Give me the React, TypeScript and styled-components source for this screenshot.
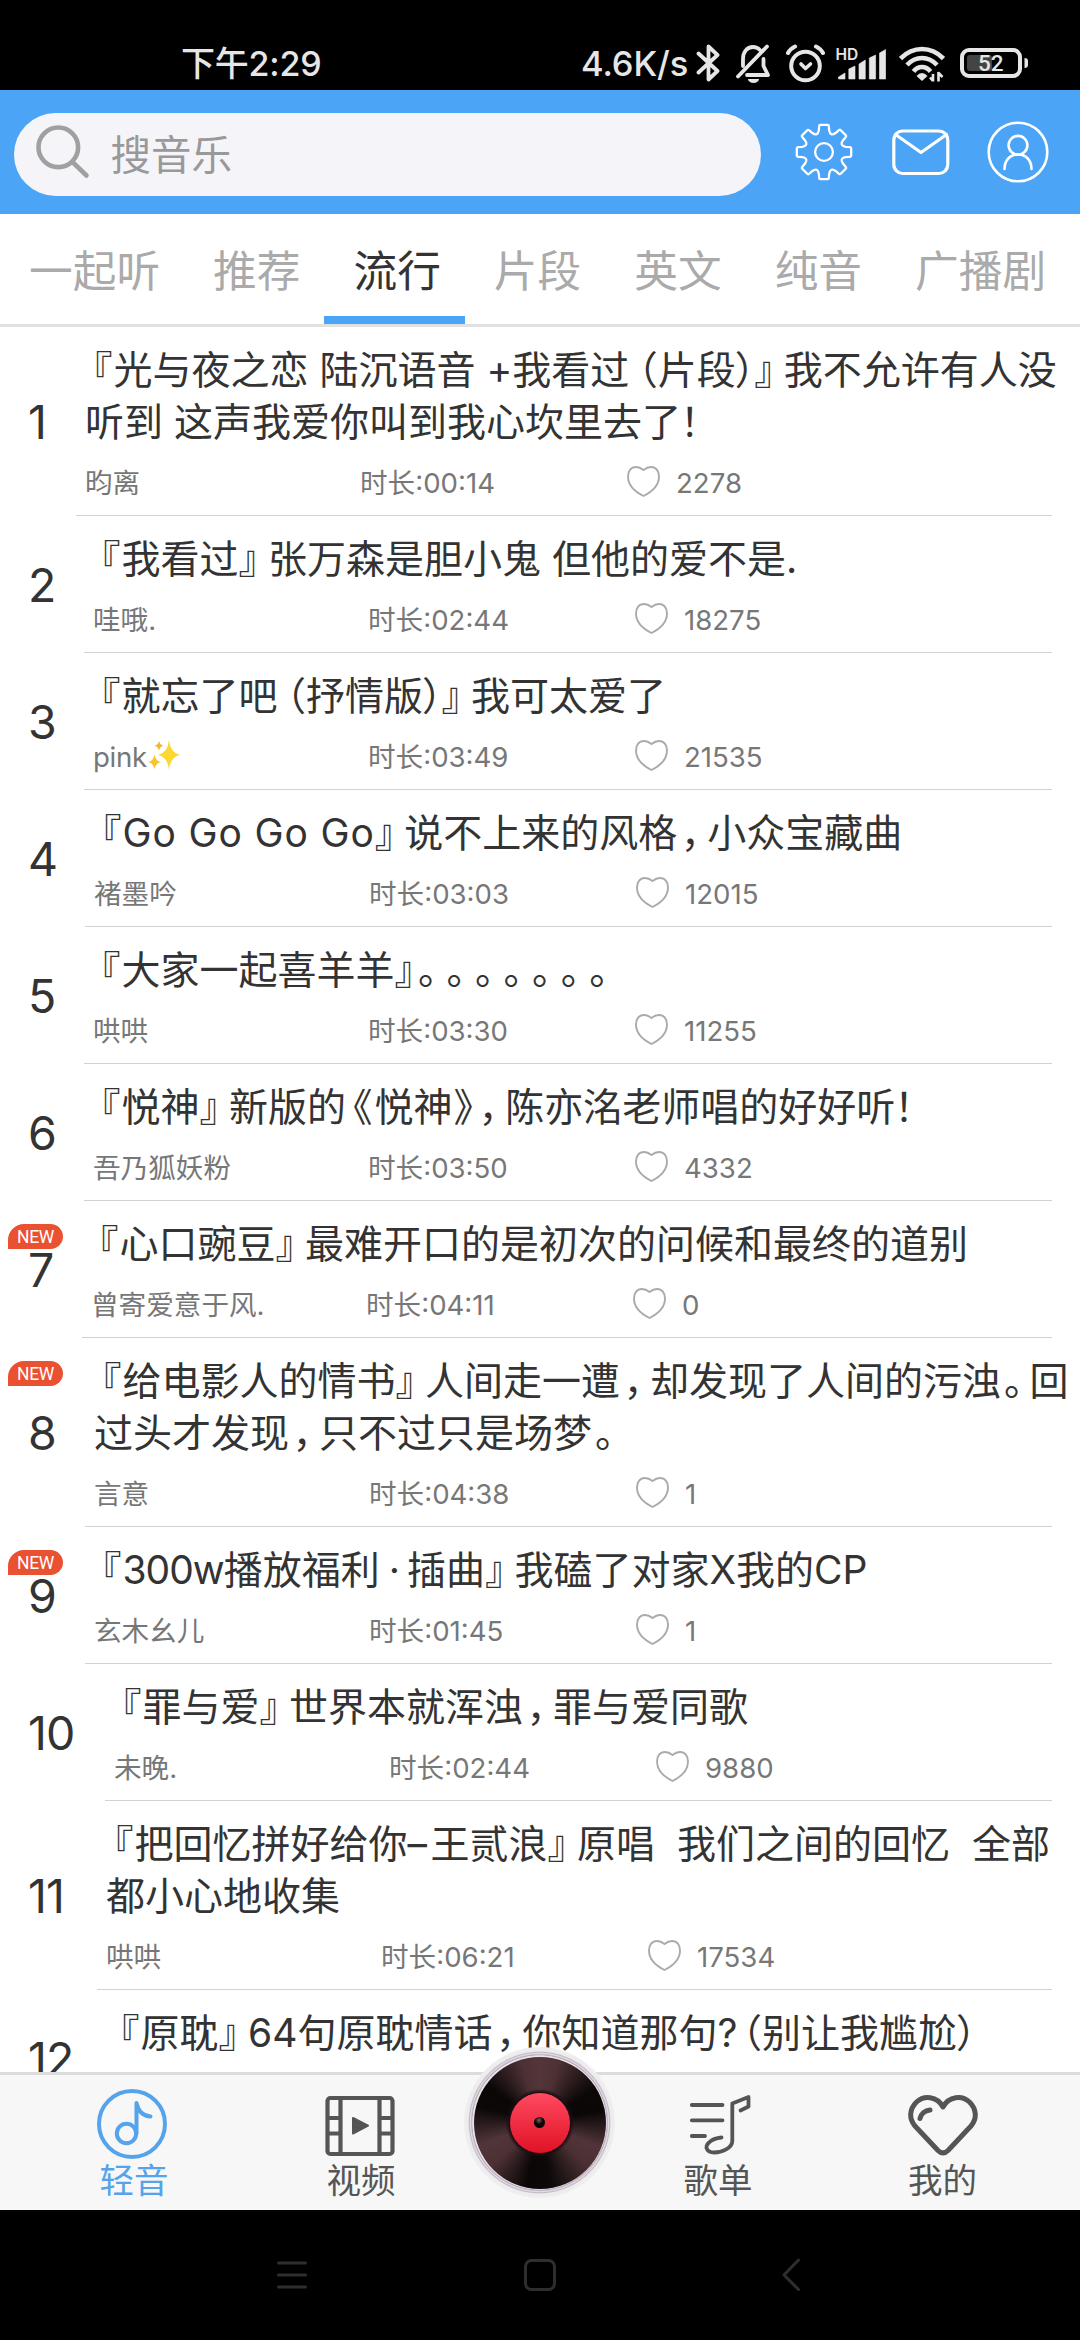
import React from "react";
import styled, { createGlobalStyle, css } from "styled-components";

const GlobalStyle = createGlobalStyle`
  * { box-sizing: border-box; }
  body {
    margin: 0;
    background: #000;
    font-family: Inter, "Noto Sans CJK SC", sans-serif;
    text-spacing-trim: space-all;
    font-kerning: normal;
  }
  svg { display: block; flex: none; }
`;

const Screen = styled.div`
  width: 1080px;
  height: 2340px;
  display: flex;
  flex-direction: column;
  overflow: hidden;
  background: #fff;
`;

/* ---------- status bar ---------- */

const StatusBar = styled.header`
  height: 90px;
  flex: none;
  display: flex;
  align-items: center;
  justify-content: space-between;
  padding: 37px 51px 0 181px;
  background: #000;
  color: #e6e6e6;
  font-weight: 500;
  white-space: nowrap;
`;

const Clock = styled.span`
  font-size: 34px;
  line-height: 40px;
  letter-spacing: -0.2px;
`;

const StatusIcons = styled.div`
  display: flex;
  align-items: center;
  height: 40px;
`;

const NetSpeed = styled.span`
  font-size: 34.5px;
  line-height: 40px;
  width: 107px;
  margin-right: 8px;
  letter-spacing: -0.1px;
`;

const StatusIcon = styled.svg<{ $after?: number }>`
  margin-right: ${(p) => p.$after ?? 0}px;
`;

/* ---------- header ---------- */

const TopBar = styled.div`
  height: 124px;
  flex: none;
  display: flex;
  align-items: center;
  padding-left: 14px;
  background: #4ba4f5;
`;

const SearchBox = styled.div`
  flex: none;
  width: 747px;
  height: 83px;
  margin: 5px 32px 0 0;
  border-radius: 42px;
  background: #f5f4f9;
  display: flex;
  align-items: center;
  padding-left: 20px;
  gap: 20.5px;
  color: #999;
  font-size: 40.5px;
  line-height: 60px;

  span { margin-top: 3px; }
`;

const HeaderIcon = styled.svg`
  margin-right: 35px;
  fill: none;
  stroke: #fff;
  stroke-linejoin: round;
  stroke-linecap: round;

  &:last-child { margin-right: 0; }
`;

const Tabs = styled.nav`
  height: 113px;
  flex: none;
  display: flex;
  border-bottom: 3px solid #e1e1e1;
`;

const Tab = styled.div<{ $active?: boolean }>`
  flex: none;
  padding: 6px 24px 0 29px;
  height: 110px;
  display: flex;
  align-items: center;
  font-size: 43.7px;
  white-space: nowrap;
  color: ${(p) => (p.$active ? "#333" : "#aaa")};
  border-bottom: 8px solid ${(p) => (p.$active ? "#4ba4f5" : "transparent")};
`;

/* ---------- list ---------- */

const List = styled.main`
  flex: 1;
  min-height: 0;
  overflow: hidden;
`;

const Row = styled.article<{ $tall: boolean }>`
  position: relative;
  height: ${(p) => (p.$tall ? 189 : 137)}px;
  display: flex;
`;

const Rank = styled.div<{ $width: number }>`
  width: ${(p) => p.$width}px;
  flex: none;
  padding-left: 28px;
  display: flex;
  align-items: center;
  font-size: 46.5px;
  line-height: 34px;
  letter-spacing: -1px;
  color: #333;
`;

const NewBadge = styled.span`
  position: absolute;
  left: 8px;
  top: 23px;
  width: 55px;
  height: 25px;
  border-radius: 16px 12.5px 12.5px 0;
  background: #ea5131;
  color: #fff;
  font: 400 17.5px/26px Roboto, sans-serif;
  letter-spacing: -0.4px;
  text-align: center;
`;

const Body = styled.div`
  flex: 1;
  min-width: 0;
  margin-right: 28px;
  padding: 17px 0 0 9px;
  border-bottom: 1px solid #d2d2d2;
  display: flex;
  flex-direction: column;
`;

const Title = styled.div`
  color: #333;
  font-size: 39px;
  line-height: 52px;
  white-space: pre;
`;

const Mark = styled.span<{ $before: number; $after: number }>`
  font-feature-settings: "halt";
  margin-left: ${(p) => p.$before}px;
  margin-right: ${(p) => p.$after}px;
`;

const Latin = styled.span<{ $spacing: number }>`
  letter-spacing: ${(p) => p.$spacing}px;
`;

const Meta = styled.div`
  display: grid;
  grid-template-columns: 275px 267px 49px 1fr;
  align-items: center;
  height: 36px;
  margin-top: 17px;
  color: #777;
  font-size: 27.6px;
  line-height: 36px;
  white-space: nowrap;

  svg { margin-top: -3px; }
`;

const Author = styled.span<{ $tight?: boolean }>`
  display: flex;
  align-items: center;
  gap: 1.5px;
  ${(p) => p.$tight && css`letter-spacing: -0.3px;`}
`;

/* ---------- bottom bar ---------- */

const BottomBar = styled.footer`
  position: relative;
  height: 138px;
  flex: none;
  border-top: 3px solid #dcdcdc;
  background: #f7f7f7;
  display: grid;
  grid-template-columns: 263px 196px 161px 196px 253px;
`;

const BottomItem = styled.div<{ $active?: boolean; $shift?: number }>`
  padding-top: 13px;
  display: flex;
  flex-direction: column;
  align-items: center;
  color: ${(p) => (p.$active ? "#55a3ea" : "#555")};
  font-size: 34.5px;
  line-height: 40px;

  svg { fill: none; stroke: currentColor; stroke-linecap: round; stroke-linejoin: round; }
  span { margin-top: -1px; margin-left: ${(p) => p.$shift ?? 0}px; }
`;

const Record = styled.div`
  position: relative;
  z-index: 1;
  justify-self: center;
  margin-top: -28px;
  width: 151px;
  height: 151px;
  border-radius: 50%;
  display: grid;
  place-items: center;
  background: radial-gradient(circle closest-side,
    #e9e4ea 0 88.5%, #b9a9b9 89.5%, #e4dde5 91.5%, #c4b9c6 93%, #ececec 94.5%, #efefef 100%);
`;

const Vinyl = styled.div`
  width: 132px;
  height: 132px;
  border-radius: 50%;
  display: grid;
  place-items: center;
  background:
    radial-gradient(circle closest-side, #1d0c12 46%, #2a0e1800 52%),
    conic-gradient(#54363a 0deg, #4b3034 18deg, #0b0807 58deg, #0a0706 78deg, #51343a 112deg, #4b3033 132deg,
      #0c0908 170deg, #0a0706 192deg, #4b3034 228deg, #51353a 250deg, #0b0807 285deg, #0a0706 305deg, #4b3034 342deg, #54363a 360deg);
`;

const Label = styled.div`
  width: 60px;
  height: 60px;
  border-radius: 50%;
  display: grid;
  place-items: center;
  background: linear-gradient(#ff4a60, #e01226);
`;

const Hole = styled.div`
  width: 11px;
  height: 11px;
  border-radius: 50%;
  background: radial-gradient(circle at 45% 30%, #8a5a5e 0, #0a0505 40%);
`;

const SystemNav = styled.div`
  height: 130px;
  flex: none;
  background: #000;
  display: flex;
  align-items: center;
  justify-content: center;
  gap: 215px;

  svg { fill: none; stroke: #2e2e2e; stroke-width: 3; stroke-linecap: round; stroke-linejoin: round; }
`;

/* ---------- data ---------- */

type Song = {
  rank: number;
  lead: number;
  lines: string[];
  author: string;
  sparkle?: boolean;
  time: string;
  likes: string;
  fresh?: boolean;
};

const songs: Song[] = [
  { rank: 1, lead: 76, lines: ["『光与夜之恋 陆沉语音 +我看过（片段）』我不允许有人没", "听到 这声我爱你叫到我心坎里去了！"], author: "昀离", time: "00:14", likes: "2278" },
  { rank: 2, lead: 84, lines: ["『我看过』张万森是胆小鬼 但他的爱不是."], author: "哇哦.", time: "02:44", likes: "18275" },
  { rank: 3, lead: 84, lines: ["『就忘了吧（抒情版）』我可太爱了"], author: "pink", sparkle: true, time: "03:49", likes: "21535" },
  { rank: 4, lead: 85, lines: ["『Go Go Go Go』说不上来的风格，小众宝藏曲"], author: "褚墨吟", time: "03:03", likes: "12015" },
  { rank: 5, lead: 84, lines: ["『大家一起喜羊羊』。。。。。。。"], author: "哄哄", time: "03:30", likes: "11255" },
  { rank: 6, lead: 84, lines: ["『悦神』新版的《悦神》，陈亦洺老师唱的好好听！"], author: "吾乃狐妖粉", time: "03:50", likes: "4332" },
  { rank: 7, lead: 82, lines: ["『心口豌豆』最难开口的是初次的问候和最终的道别"], author: "曾寄爱意于风.", time: "04:11", likes: "0", fresh: true },
  { rank: 8, lead: 85, lines: ["『给电影人的情书』人间走一遭，却发现了人间的污浊。回", "过头才发现，只不过只是场梦。"], author: "言意", time: "04:38", likes: "1", fresh: true },
  { rank: 9, lead: 85, lines: ["『300w播放福利 · 插曲』我磕了对家X我的CP"], author: "玄木幺儿", time: "01:45", likes: "1", fresh: true },
  { rank: 10, lead: 105, lines: ["『罪与爱』世界本就浑浊，罪与爱同歌"], author: "未晚.", time: "02:44", likes: "9880" },
  { rank: 11, lead: 97, lines: ["『把回忆拼好给你–王贰浪』原唱  我们之间的回忆  全部", "都小心地收集"], author: "哄哄", time: "06:21", likes: "17534" },
  { rank: 12, lead: 103, lines: ["『原耽』64句原耽情话，你知道那句?（别让我尴尬）"], author: "", time: "", likes: "" },
];

/* space before and after each half-width punctuation mark */
const spacing: Record<string, [number, number]> = {
  "『": [8, 1],
  "』": [0, 10],
  "（": [9, 0],
  "）": [-1, 0],
  "《": [7, 2],
  "》": [1, 2],
  "，": [3.5, 7],
  "。": [3, 6],
  "！": [-1, 0],
};

/* tracking of the Latin runs inside titles */
const tracking: Record<string, number> = {
  "Go Go Go Go": 0.85,
  "300w": -1,
  " · ": -2,
  "–": 3.5,
};

const tokens = /(Go Go Go Go|300w| · |–|[『』（）《》，。！])/;

function SongTitle({ text }: { text: string }) {
  const parts = text.split(tokens).filter(Boolean);
  return (
    <Title>
      {parts.map((part, i) => {
        const mark = spacing[part];
        if (mark) {
          const after = part === "』" && parts[i + 1] === "。" ? 1 : mark[1];
          const before = part === "（" && parts[i - 1]?.endsWith("?") ? 5 : mark[0];
          return <Mark key={i} $before={before} $after={after}>{part}</Mark>;
        }
        if (part in tracking) {
          return <Latin key={i} $spacing={tracking[part]}>{part}</Latin>;
        }
        return part;
      })}
    </Title>
  );
}

const LikeIcon = () => (
  <svg width="33" height="31" viewBox="0 0 33 31" fill="none" stroke="#aaa" strokeWidth="1.9" strokeLinejoin="round">
    <path d="M16.5 4C14 2 11.500 1 9 1C4 1 1 5 1 10.500C1 19 6.500 25 16.500 30C26.500 25 32 19 32 10.500C32 5 29 1 24 1C21.500 1 19 2 16.500 4Z" />
  </svg>
);

const Sparkles = () => (
  <svg width="32" height="31" viewBox="0 0 32 31" fill="#fdd835">
    <path d="M21 0Q22.500 13 32 15Q22.500 17 21 30Q19.500 17 10 15Q19.500 13 21 0Z" />
    <path d="M6.500 14.500Q7.500 21 13 22Q7.500 23 6.500 29.500Q5.500 23 0 22Q5.500 21 6.500 14.500Z" fill="#f6c52c" />
    <path d="M11 0.500Q11.700 5 15.500 5.700Q11.700 6.400 11 11Q10.300 6.400 6.500 5.700Q10.300 5 11 0.500Z" fill="#f2b632" />
  </svg>
);

function gearPath(c: number) {
  const at = (x: number, y: number, deg: number) => {
    const a = (deg * Math.PI) / 180;
    return `${(c + x * Math.cos(a) - y * Math.sin(a)).toFixed(2)} ${(c + x * Math.sin(a) + y * Math.cos(a)).toFixed(2)}`;
  };
  let d = "";
  for (let i = 0; i < 8; i++) {
    const deg = i * 45;
    d += `${i ? "L" : "M"}${at(-4.8, -26, deg)}Q${at(-4.7, -27.2, deg)} ${at(-3.6, -27.2, deg)}L${at(3.6, -27.2, deg)}Q${at(4.7, -27.2, deg)} ${at(4.8, -26, deg)}`;
    d += `L${at(5.2, -21.6, deg)}Q${at(0, -16.5, deg + 22.5)} ${at(-5.2, -21.6, deg + 45)}`;
  }
  return d + "Z";
}

const SongRow = ({ song }: { song: Song }) => (
  <Row $tall={song.lines.length > 1}>
    <Rank $width={song.lead}>{song.rank}</Rank>
    {song.fresh && <NewBadge>NEW</NewBadge>}
    <Body>
      {song.lines.map((line) => (
        <SongTitle key={line} text={line} />
      ))}
      {song.time && (
        <Meta>
          <Author $tight={song.sparkle}>
            {song.author}
            {song.sparkle && <Sparkles />}
          </Author>
          <span>时长:{song.time}</span>
          <LikeIcon />
          <span>{song.likes}</span>
        </Meta>
      )}
    </Body>
  </Row>
);

const tabs = ["一起听", "推荐", "流行", "片段", "英文", "纯音", "广播剧"];

export default function App() {
  return (
    <Screen>
      <GlobalStyle />
      <StatusBar>
        <Clock>下午2:29</Clock>
        <StatusIcons>
          <NetSpeed>4.6K/s</NetSpeed>
          <StatusIcon $after={15} width="25" height="40" fill="none" stroke="#e6e6e6" strokeWidth="3.8" strokeLinejoin="round" strokeLinecap="round">
            <path d="M2.500 9.500L21.500 27L12.500 35.500V2.500L21.500 11L2.500 28.500" />
          </StatusIcon>
          <StatusIcon $after={15} width="35" height="40" fill="none" stroke="#e6e6e6" strokeWidth="3.8" strokeLinejoin="round" strokeLinecap="round">
            <path d="M7 22V15C7 8 11 3 17 3C20 3 22 4 24 6" />
            <path d="M31 2.500L2 32.500" />
            <path d="M27.500 15V22L32 31H11" />
            <path d="M12 35H23A5.500 4 0 0 1 12 35Z" fill="#e6e6e6" stroke="none" />
          </StatusIcon>
          <StatusIcon $after={11} width="39" height="40" fill="none" stroke="#e6e6e6" strokeLinejoin="round" strokeLinecap="round">
            <circle cx="19.500" cy="22" r="14.300" strokeWidth="4" />
            <path d="M15 20L19.500 24.500L24.500 20" strokeWidth="3.600" />
            <path d="M2 9Q4 5 9 2.500M37 9Q35 5 30 2.500" strokeWidth="4" />
          </StatusIcon>
          <StatusIcon $after={13} width="50" height="40" fill="#e6e6e6">
            <text x="-0.500" y="15.500" fontFamily="Inter, sans-serif" fontWeight="600" fontSize="15.500">HD</text>
            <path d="M2.500 35V33L9 29V35ZM12.800 35V25L19 22V35ZM23 35V20L29.300 16V35ZM33.300 35V14L39.600 11V35ZM43.500 35V9L49.700 5.500V35Z" stroke="#e6e6e6" strokeWidth=".6" strokeLinejoin="round" />
          </StatusIcon>
          <StatusIcon $after={15} width="46" height="40" fill="none" stroke="#e6e6e6" strokeWidth="4.600">
            <path d="M1.500 14.500Q11 5 23 5T44.500 14.500" />
            <path d="M8 21Q14.500 14 23 14T38 21" />
            <path d="M14.500 27.500Q18 23 23 23T31.500 27.500" />
            <path d="M17.500 32Q23 26 28.500 32L23 37Z" fill="#e6e6e6" stroke="none" />
            <path d="M34 37.500V30M34 37L31 33.500M39.500 28V37.500M39 28.500L43.500 33" strokeWidth="2.600" />
          </StatusIcon>
          <StatusIcon width="69" height="40" fill="none">
            <rect x="2" y="6" width="58" height="26" rx="7" stroke="#e6e6e6" strokeWidth="4" />
            <rect x="7" y="11" width="25" height="16" rx="3" fill="#444" />
            <path d="M64.500 14Q68 14 68 17V21Q68 24 64.500 24Z" fill="#e6e6e6" />
            <text x="18" y="27" fill="#e6e6e6" fontFamily="Roboto, sans-serif" fontWeight="500" fontSize="22.500">52</text>
          </StatusIcon>
        </StatusIcons>
      </StatusBar>

      <TopBar>
        <SearchBox>
          <svg width="56" height="60" fill="none" stroke="#a0a0a0" strokeWidth="4.600" strokeLinecap="round">
            <circle cx="24.300" cy="22.300" r="19.800" />
            <path d="M38.500 37L52.500 50.500" />
          </svg>
          <span>搜音乐</span>
        </SearchBox>
        <HeaderIcon width="62" height="62" strokeWidth="2.300">
          <path d={gearPath(31)} />
          <circle cx="31" cy="31" r="8.900" />
        </HeaderIcon>
        <HeaderIcon width="62" height="62" strokeWidth="3.200">
          <rect x="3.800" y="10" width="54" height="42.500" rx="9" />
          <path d="M5.500 13.500L31 31.500L56.500 13.500" />
        </HeaderIcon>
        <HeaderIcon width="62" height="62" strokeWidth="2.600">
          <circle cx="31" cy="31" r="29.300" />
          <circle cx="31" cy="24.300" r="9.400" />
          <path d="M17.500 48C17.500 28.500 44.500 28.500 44.500 48" />
        </HeaderIcon>
      </TopBar>

      <Tabs>
        {tabs.map((t) => (
          <Tab key={t} $active={t === "流行"}>{t}</Tab>
        ))}
      </Tabs>

      <List>
        {songs.map((s) => (
          <SongRow key={s.rank} song={s} />
        ))}
      </List>

      <BottomBar>
        <BottomItem $active $shift={5}>
          <svg width="72" height="74" strokeWidth="4">
            <circle cx="36" cy="36" r="33" />
            <circle cx="30.500" cy="45.500" r="9.700" />
            <path d="M40.500 45.500V15C42 22 46 28 54.500 28.500" />
          </svg>
          <span>轻音</span>
        </BottomItem>
        <BottomItem>
          <svg width="72" height="74" strokeWidth="4.200">
            <rect x="2.500" y="10" width="65" height="56" rx="3" />
            <path d="M15.500 10V66M54.500 10V66M3 30H15.500M3 45.500H15.500M54.500 30H67M54.500 45.500H67" />
            <path d="M28 30L43 37.700L28 45.500Z" fill="currentColor" strokeWidth="2" />
          </svg>
          <span>视频</span>
        </BottomItem>
        <Record>
          <Vinyl>
            <Label>
              <Hole />
            </Label>
          </Vinyl>
        </Record>
        <BottomItem>
          <svg width="72" height="74" strokeWidth="3.800">
            <path d="M9.800 17H40.500M9.800 32.300H40.500M9.800 48H23" />
            <path d="M58.500 22.500L66.500 18.500V9L50.300 15.500V53C50.300 60 40 64.500 32 64.500C25 64.500 22 59 27 54.500C30 51.500 34 50 39.500 49.500" />
          </svg>
          <span>歌单</span>
        </BottomItem>
        <BottomItem>
          <svg width="72" height="74" strokeWidth="5">
            <path d="M36 19C30 8 17 7 9.500 14C2 21.500 2 31 8 38L31 62.500Q36 67.500 41 62.500L64 38C70 31 70 21.500 62.500 14C55 7 42 8 36 19Z" />
            <path d="M13 30.500C14 26 18 22.500 23 22" />
          </svg>
          <span>我的</span>
        </BottomItem>
      </BottomBar>

      <SystemNav>
        <svg width="34" height="34">
          <path d="M4.500 5H31.500M4.500 17H31.500M4.500 29H31.500" />
        </svg>
        <svg width="34" height="34">
          <rect x="2.500" y="2.500" width="29" height="29" rx="6" />
        </svg>
        <svg width="34" height="34">
          <path d="M26.500 2L12 17L26.500 31.500" />
        </svg>
      </SystemNav>
    </Screen>
  );
}
